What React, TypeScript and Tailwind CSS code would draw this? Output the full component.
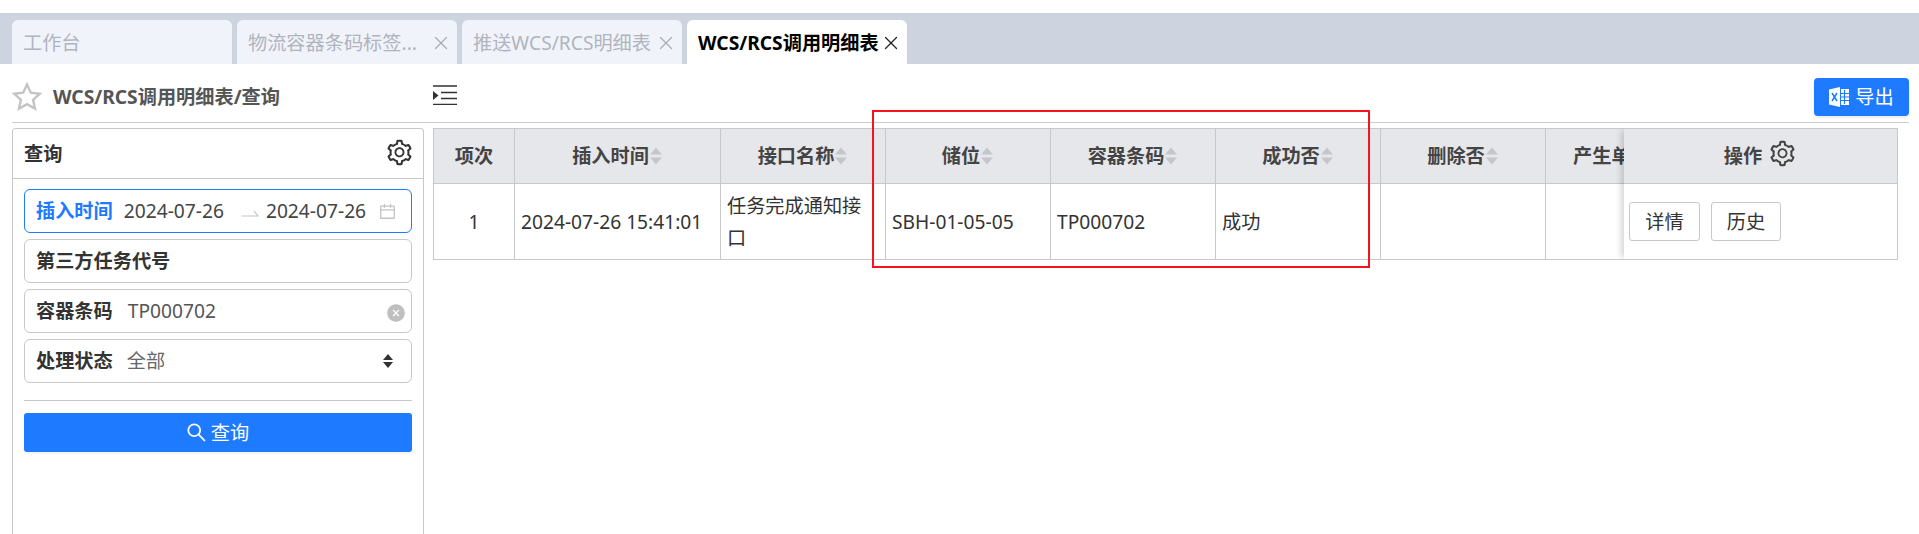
import React from 'react';
import { AiOutlineSetting, AiOutlineSearch, AiOutlineCalendar, AiFillCloseCircle } from 'react-icons/ai';
import { X } from 'lucide-react';

const font = "font-['Noto_Sans','Noto_Sans_CJK_SC',sans-serif]";

function Sorter() {
  return (
    <svg width="14" height="20" viewBox="0 0 14 20" className="shrink-0">
      <path d="M7 1.5 L13 8.5 L1 8.5 Z" fill="#c4c6c9" />
      <path d="M7 18.5 L13 11.5 L1 11.5 Z" fill="#c4c6c9" />
    </svg>
  );
}

function Tab({ label, active, close = true }: { label: string; active?: boolean; close?: boolean }) {
  return (
    <div className={`w-[220px] h-[44px] rounded-t-[6px] flex items-center pl-[11px] pr-[5px] pt-[1px] ${active ? 'bg-white text-black font-bold' : 'bg-[#f0f3f9] text-[#b0b4bf]'}`}>
      <span className="flex-1 whitespace-nowrap overflow-hidden">{label}</span>
      {close && <X size={22} strokeWidth={1.4} className={active ? 'text-[#222]' : 'text-[#a9adb8]'} />}
    </div>
  );
}

function Field({ label, active, children }: { label: string; active?: boolean; children?: React.ReactNode }) {
  return (
    <div className={`h-[44px] rounded-[6px] border flex items-center pl-[11px] pr-[5px] ${active ? 'border-[#1e7bff]' : 'border-[#c8c8c8]'}`}>
      <span className={`font-bold whitespace-nowrap ${active ? 'text-[#1e7bff]' : 'text-[#333]'}`}>{label}</span>
      {children}
    </div>
  );
}

const columns = [
  { title: '项次', width: 'w-[81px]', cell: '1', center: true },
  { title: '插入时间', width: 'w-[206px]', cell: '2024-07-26 15:41:01', sort: true },
  { title: '接口名称', width: 'w-[165px]', cell: '任务完成通知接口', sort: true },
  { title: '储位', width: 'w-[165px]', cell: 'SBH-01-05-05', sort: true },
  { title: '容器条码', width: 'w-[165px]', cell: 'TP000702', sort: true },
  { title: '成功否', width: 'w-[165px]', cell: '成功', sort: true },
  { title: '删除否', width: 'w-[165px]', cell: '', sort: true },
  { title: '产生单据号', width: 'w-[165px]', cell: '', sort: true },
];

export default function App() {
  return (
    <div className={`${font} relative h-[534px] bg-white overflow-hidden text-[19.2px] leading-[26px] text-[#333]`}>
      <div className="h-[13px]" />
      <div className="h-[51px] bg-[#cdd4e0] flex items-end pl-[12px] gap-[5px]">
        <Tab label="工作台" close={false} />
        <Tab label="物流容器条码标签..." />
        <Tab label="推送WCS/RCS明细表" />
        <Tab label="WCS/RCS调用明细表" active />
      </div>

      <div className="ml-[12px] mr-[10px] h-[59px] pt-[7px] border-b border-[#cccccc] flex items-center">
        <svg width="30" height="29" viewBox="0 0 30 29" fill="none" stroke="#c4c4c4" strokeWidth="2.4" className="shrink-0">
          <path d="M15 2.5l3.8 8.2 9 1-6.7 6.1 1.9 8.8L15 22.2l-8 4.4 1.9-8.8-6.7-6.1 9-1z" />
        </svg>
        <span className="ml-[11px] w-[380px] font-bold text-[#555]">WCS/RCS调用明细表/查询</span>
        <svg width="24" height="20" viewBox="0 0 24 20" className="shrink-0 -mt-[3px]">
          <path d="M0 1h24M8 7.5h16M8 13.5h16M0 19.5h24" stroke="#333" strokeWidth="1.6" />
          <path d="M0 6l5.5 4.5L0 15z" fill="#333" />
        </svg>
        <div className="flex-1" />
        <button className="w-[95px] h-[38px] rounded-[4px] bg-[#1e7bff] text-white flex items-center justify-center gap-[6px] shadow-[0_2px_3px_rgba(0,0,0,0.08)]">
          <svg width="20" height="20" viewBox="0 0 20 20" className="shrink-0">
            <path d="M0 2.5L11 0v20L0 17.5z" fill="#fff" />
            <path d="M3 6l5 8M8 6l-5 8" stroke="#1e7bff" strokeWidth="1.5" />
            <path d="M12 2h8v16h-8z" fill="#fff" />
            <path d="M15.5 3v14M12 6.5h8M12 10h8M12 13.5h8" stroke="#1e7bff" strokeWidth="1.2" />
          </svg>
          导出
        </button>
      </div>

      <div className="flex items-start pl-[12px] pt-[5px] gap-[9px] h-[340px]">
        <div className="w-[412px] h-[420px] shrink-0 border border-[#c8c8c8] rounded-t-[3px]">
          <div className="h-[50px] border-b border-[#c8c8c8] flex items-center justify-between pl-[11px] pr-[9px] font-bold">
            查询
            <AiOutlineSetting size={29} className="text-[#333] -mt-[3px]" />
          </div>
          <div className="px-[11px] pt-[10px] flex flex-col gap-[6px]">
            <Field label="插入时间" active>
              <span className="ml-[11px] text-[#444]">2024-07-26</span>
              <svg width="17" height="8" viewBox="0 0 17 8" className="ml-[18px] mr-[7px] mt-[3px] shrink-0">
                <path d="M0 7h16L12 2" fill="none" stroke="#c4c4c4" strokeWidth="1.2" />
              </svg>
              <span className="text-[#444]">2024-07-26</span>
              <AiOutlineCalendar size={19} className="ml-[12px] text-[#c4c4c4]" />
            </Field>
            <Field label="第三方任务代号" />
            <Field label="容器条码">
              <span className="ml-[15px] flex-1 text-[#555]">TP000702</span>
              <AiFillCloseCircle size={20} className="text-[#bfbfbf] mt-[4px]" />
            </Field>
            <Field label="处理状态">
              <span className="ml-[14px] flex-1 text-[#666]">全部</span>
              <svg width="12" height="16" viewBox="0 0 12 16" className="mr-[12px] shrink-0">
                <path d="M6 1l5 6H1zM6 15l5-6H1z" fill="#333" />
              </svg>
            </Field>
          </div>
          <div className="mx-[11px] mt-[17px] border-t border-[#c8c8c8]" />
          <div className="mx-[11px] mt-[12px] h-[39px] rounded-[3px] bg-[#1e7bff] text-white flex items-center justify-center gap-[3px] pr-[2px] shadow-[0_2px_3px_rgba(0,0,0,0.05)]">
            <AiOutlineSearch size={23} />
            查询
          </div>
        </div>

        <div className="relative w-[1465px] h-[132px] border border-[#c8c8c8] overflow-hidden">
          <div className="flex h-[55px] bg-[#e6e7eb] border-b border-[#c8c8c8] font-bold text-[#444]">
            {columns.map((c) => (
              <div key={c.title} className={`${c.width} shrink-0 border-r border-[#c8c8c8] flex items-center justify-center whitespace-nowrap overflow-hidden`}>
                {c.title}
                {c.sort && <Sorter />}
              </div>
            ))}
          </div>
          <div className="flex h-[75px]">
            {columns.map((c) => (
              <div key={c.title} className={`${c.width} shrink-0 border-r border-[#c8c8c8] flex items-center px-[6px] text-[#333] ${c.center ? 'justify-center' : ''} ${c.title === '接口名称' ? 'leading-[32px]' : ''}`}>
                {c.cell}
              </div>
            ))}
          </div>
          <div className="absolute right-0 top-0 bottom-0 w-[273px] bg-white shadow-[-5px_0_6px_-2px_rgba(0,0,0,0.16)]">
            <div className="h-[55px] bg-[#e6e7eb] border-b border-[#c8c8c8] flex items-center justify-center gap-[6px] font-bold text-[#444]">
              操作
              <AiOutlineSetting size={29} className="text-[#444] -mt-[5px]" />
            </div>
            <div className="h-[75px] flex items-center pl-[5px] gap-[11px] text-[#333]">
              <div className="w-[71px] h-[39px] border border-[#c8c8c8] rounded-[3px] flex items-center justify-center">详情</div>
              <div className="w-[70px] h-[39px] border border-[#c8c8c8] rounded-[3px] flex items-center justify-center">历史</div>
            </div>
          </div>
        </div>
      </div>

      <div className="absolute left-[872px] top-[110px] w-[498px] h-[158px] border-2 border-[#f5141c]" />
    </div>
  );
}
